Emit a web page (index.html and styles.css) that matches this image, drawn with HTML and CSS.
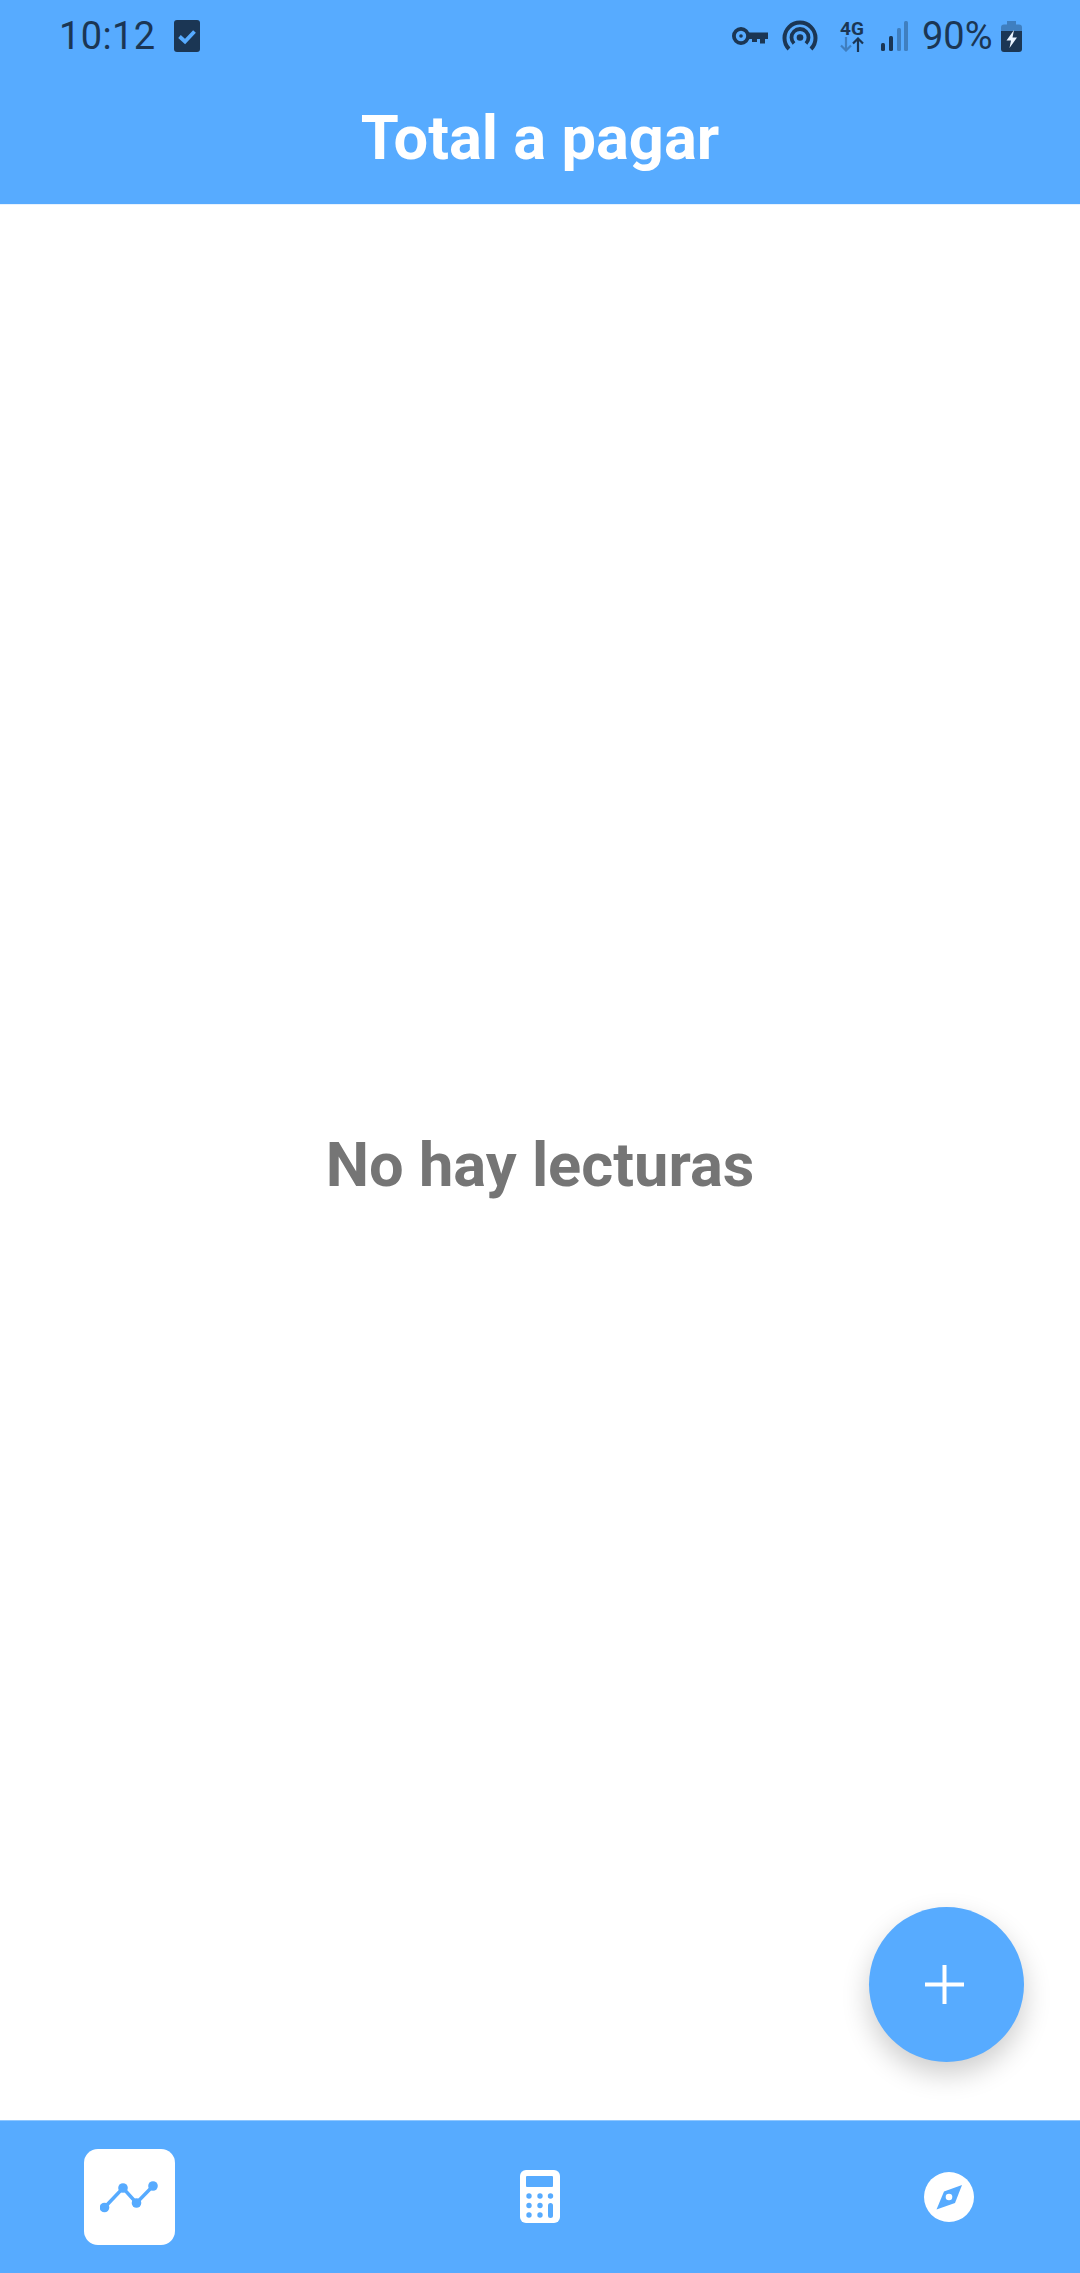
FILE: index.html
```html
<!DOCTYPE html>
<html lang="es">
<head>
<meta charset="utf-8">
<title>Total a pagar</title>
<link rel="stylesheet" href="styles.css">
</head>
<body>
<div class="app">
  <header class="header">
    <div class="status">
      <div class="status-left">
        <span class="time">10:12</span>
        <svg class="ic-check" viewBox="0 0 26 32"><rect width="26" height="32" rx="3" fill="#1b3654"/><path d="M5.500 16.500l5.500 5 9.500-10" fill="none" stroke="#57abff" stroke-width="3.800"/></svg>
      </div>
      <div class="status-right">
        <svg class="ic-key" viewBox="0 0 36 20"><circle cx="9" cy="10" r="7.100" fill="none" stroke="#1b3654" stroke-width="3.800"/><circle cx="9" cy="10" r="1.800" fill="#1b3654"/><path d="M15 6.500h21v6.500h-3v4.500h-5V13h-3v3h-5v-3h-5z" fill="#1b3654"/></svg>
        <svg class="ic-hot" viewBox="0 0 36 32"><path d="M7 29a15.500 15.500 0 1 1 22 0" fill="none" stroke="#1b3654" stroke-width="4"/><path d="M12 23.500a8.500 8.500 0 1 1 12 0" fill="none" stroke="#1b3654" stroke-width="3.800"/><circle cx="18" cy="17.500" r="3.300" fill="#1b3654"/></svg>
        <div class="net">
          <span class="net-label">4G</span>
          <svg class="ic-arrows" viewBox="0 0 26 15"><path d="M7 0v13M2 8.500l5 5 5-5" fill="none" stroke="#3f7fc0" stroke-width="2.200"/><path d="M19 15V2M14 6.500l5-5 5 5" fill="none" stroke="#1b3654" stroke-width="2.200"/></svg>
        </div>
        <svg class="ic-signal" viewBox="0 0 27 30"><rect x="0" y="22" width="4" height="8" rx="1.500" fill="#1b3654"/><rect x="8" y="15" width="4" height="15" rx="1.500" fill="#1b3654"/><rect x="16" y="7" width="4" height="23" rx="1.500" fill="#3f7fc0"/><rect x="23" y="0" width="4" height="30" rx="1.500" fill="#3f7fc0"/></svg>
        <span class="battery-text">90%</span>
        <svg class="ic-batt" viewBox="0 0 21 31"><path d="M6 0h9v3.500h3a3 3 0 0 1 3 3V10H0V6.500a3 3 0 0 1 3-3h3z" fill="#3f7fc0"/><path d="M0 10h21v18a3 3 0 0 1-3 3H3a3 3 0 0 1-3-3z" fill="#1b3654"/><path d="M13 9L5.500 19.500h4.500L8.500 27l7.500-10.500h-4.500z" fill="#eaf4ff"/></svg>
      </div>
    </div>
    <h1 class="title">Total a pagar</h1>
  </header>

  <main class="content">
    <p class="empty">No hay lecturas</p>
    <button class="fab" type="button" aria-label="Añadir">
      <svg class="ic-plus" viewBox="0 0 39 39"><path d="M19.500 0v39M0 19.500h39" stroke="#fff" stroke-width="4" fill="none"/></svg>
    </button>
  </main>

  <nav class="nav">
    <div class="nav-slot">
      <div class="nav-active">
        <svg class="ic-chart" viewBox="0 0 58 36"><path d="M4.500 26.500L23 7l13.500 15L53 5" fill="none" stroke="#57abff" stroke-width="3.500"/><circle cx="4.500" cy="26.500" r="4.800" fill="#57abff"/><circle cx="23" cy="7" r="4.800" fill="#57abff"/><circle cx="36.500" cy="22" r="4.800" fill="#57abff"/><circle cx="53" cy="5" r="4.800" fill="#57abff"/></svg>
      </div>
    </div>
    <div class="nav-slot">
      <svg class="ic-calc" viewBox="0 0 40 53"><rect width="40" height="53" rx="6" fill="#fff"/><rect x="6" y="6" width="27" height="11" rx="1" fill="#57abff"/><g fill="#57abff"><circle cx="9" cy="26" r="2.700"/><circle cx="20" cy="26" r="2.700"/><circle cx="30.500" cy="26" r="2.700"/><circle cx="9" cy="35.500" r="2.700"/><circle cx="20" cy="35.500" r="2.700"/><circle cx="9" cy="45" r="2.700"/><circle cx="20" cy="45" r="2.700"/><rect x="28" y="33" width="5" height="15" rx="2.500"/></g></svg>
    </div>
    <div class="nav-slot nav-slot-last">
      <svg class="ic-compass" viewBox="0 0 50 50"><circle cx="25" cy="25" r="25" fill="#fff"/><path d="M12.500 37.500L20 19.500 38 13l-7 18z" fill="#57abff"/><circle cx="25" cy="25" r="3.300" fill="#fff"/></svg>
    </div>
  </nav>
</div>
</body>
</html>
```

FILE: styles.css
```css
* { box-sizing: border-box; }
html, body { margin: 0; padding: 0; background: #fff; }
body { font-family: Roboto, "Noto Sans", sans-serif; }

.app {
  width: 1080px;
  height: 2273px;
  display: flex;
  flex-direction: column;
  overflow: hidden;
}

.header {
  height: 204px;
  background: #57abff;
  flex: none;
}

.status {
  height: 72px;
  padding: 0 58px 0 59px;
  display: flex;
  align-items: center;
  justify-content: space-between;
  color: #1b3654;
}
.status-left, .status-right { display: flex; align-items: center; }

.time { font-size: 38px; line-height: 72px; width: 115px; letter-spacing: 0.4px; }
.ic-check { width: 26px; height: 32px; }

.ic-key { width: 36px; height: 20px; margin-right: 14px; }
.ic-hot { width: 36px; height: 32px; margin-right: 21px; }
.net { width: 26px; height: 32px; margin-right: 16px; display: flex; flex-direction: column; align-items: center; }
.net-label { font-size: 19px; font-weight: 700; line-height: 15px; margin-top: 1px; margin-bottom: 1px; }
.ic-arrows { width: 26px; height: 15px; }
.ic-signal { width: 27px; height: 30px; margin-right: 14px; }
.battery-text { font-size: 38px; line-height: 72px; width: 79px; }
.ic-batt { width: 21px; height: 31px; }

.title {
  margin: 0;
  height: 132px;
  display: flex;
  align-items: center;
  justify-content: center;
  color: #fff;
  font-size: 61.4px;
  font-weight: 700;
}

.content {
  position: relative;
  flex: 1;
  display: flex;
  align-items: center;
  justify-content: center;
  border-top: 1px solid #e6f2ff;
}

.empty {
  margin: 5px 0 0;
  font-size: 61.4px;
  font-weight: 700;
  color: #757575;
}

.fab {
  position: absolute;
  left: 869px;
  top: 1702px;
  width: 155px;
  height: 155px;
  padding: 0 5px 1px 0;
  border: 0;
  border-radius: 50%;
  background: #57abff;
  display: flex;
  align-items: center;
  justify-content: center;
  box-shadow: 0 12px 28px rgba(0, 0, 0, 0.2);
}
.ic-plus { width: 39px; height: 39px; }

.nav {
  height: 153px;
  flex: none;
  background: #57abff;
  border-top: 1px solid #8fc7ff;
  display: flex;
  align-items: center;
  justify-content: space-between;
  padding: 0 84px 0 84px;
}
.nav-slot { width: 91px; display: flex; justify-content: center; }
.nav-slot-last { padding-right: 3px; }
.nav-active {
  width: 91px;
  height: 96px;
  border-radius: 14px;
  background: #fff;
  display: flex;
  align-items: center;
  justify-content: center;
}
.ic-chart { width: 58px; height: 36px; margin: 4px 1px 0 0; }
.ic-calc { width: 40px; height: 53px; margin-bottom: 2px; }
.ic-compass { width: 50px; height: 50px; }
```
